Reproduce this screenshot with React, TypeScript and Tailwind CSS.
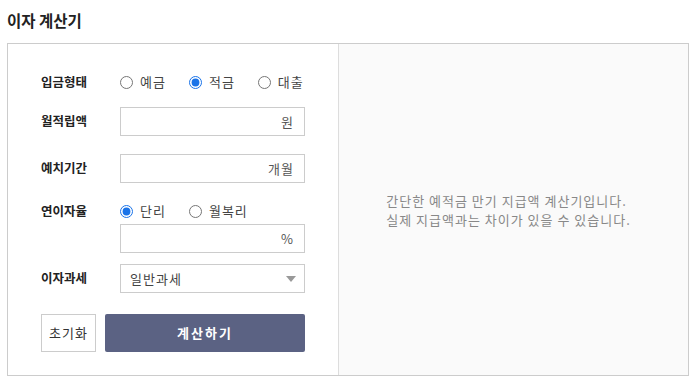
import { useState } from "react";

const font = "font-['Malgun_Gothic','Noto_Sans_CJK_KR',sans-serif]";

function Label({ children }: { children: string }) {
  return <span className="w-[79px] shrink-0 text-[12.5px] font-bold text-[#222]">{children}</span>;
}

function Radio({ name, label, checked, onChange }: { name: string; label: string; checked: boolean; onChange: () => void }) {
  return (
    <label className="flex items-center gap-[7px] text-[13px] tracking-[1px] text-[#444]">
      <input type="radio" name={name} checked={checked} onChange={onChange} className="m-0 w-[13px] h-[13px] accent-[#1a73e8]" />
      {label}
    </label>
  );
}

function UnitInput({ unit }: { unit: string }) {
  return (
    <div className="flex items-center w-[185px] h-[29px] border border-[#ccc] bg-white pr-[10px]">
      <input className="flex-1 min-w-0 h-full px-2 outline-none bg-transparent" />
      <span className="text-[13px] tracking-[1px] text-[#555]">{unit}</span>
    </div>
  );
}

export default function App() {
  const [kind, setKind] = useState("적금");
  const [rate, setRate] = useState("단리");

  return (
    <div className={`${font} w-[692px] h-[377px] bg-white pt-[10px]`}>
      <h2 className="pl-[7px] text-[15.5px] font-bold text-[#222] leading-[20px]">이자 계산기</h2>
      <div className="flex mt-[13px] ml-[7px] mr-[3px] border border-[#ccc] h-[333px]">
        {/* form */}
        <div className="w-[331px] border-r border-[#ddd] pl-[33px] flex flex-col">
          <div className="flex items-center h-[20px] mt-[28px]">
            <Label>입금형태</Label>
            <div className="flex items-center gap-[23px]">
              {["예금", "적금", "대출"].map((k) => (
                <Radio key={k} name="kind" label={k} checked={kind === k} onChange={() => setKind(k)} />
              ))}
            </div>
          </div>
          <div className="flex items-center mt-[15px]">
            <Label>월적립액</Label>
            <UnitInput unit="원" />
          </div>
          <div className="flex items-center mt-[18px]">
            <Label>예치기간</Label>
            <UnitInput unit="개월" />
          </div>
          <div className="flex items-center h-[20px] mt-[18px]">
            <Label>연이자율</Label>
            <div className="flex items-center gap-[23px]">
              {["단리", "월복리"].map((k) => (
                <Radio key={k} name="rate" label={k} checked={rate === k} onChange={() => setRate(k)} />
              ))}
            </div>
          </div>
          <div className="flex items-center mt-[3px]">
            <span className="w-[79px] shrink-0" />
            <UnitInput unit="%" />
          </div>
          <div className="flex items-center mt-[11px]">
            <Label>이자과세</Label>
            <div className="flex items-center justify-between w-[185px] h-[29px] border border-[#ccc] bg-white pl-[9px] pr-[8px]">
              <span className="text-[13px] tracking-[1px] text-[#444]">일반과세</span>
              <svg width="10" height="6" viewBox="0 0 10 6">
                <path d="M0 0h10L5 6z" fill="#999" />
              </svg>
            </div>
          </div>
          <div className="flex items-center gap-[9px] mt-[21px]">
            <button className="w-[55px] h-[38px] border border-[#ccc] bg-white text-[13px] tracking-[1px] text-[#333]">초기화</button>
            <button className="w-[200px] h-[38px] rounded-[2px] bg-[#5b6283] text-[13px] tracking-[2px] font-bold text-white">계산하기</button>
          </div>
        </div>
        {/* info */}
        <div className="flex-1 bg-[#fafafa] flex items-center justify-center pr-[10px]">
          <p className="text-[13px] tracking-[1px] leading-[19px] text-[#888]">
            간단한 예적금 만기 지급액 계산기입니다.
            <br />
            실제 지급액과는 차이가 있을 수 있습니다.
          </p>
        </div>
      </div>
    </div>
  );
}
